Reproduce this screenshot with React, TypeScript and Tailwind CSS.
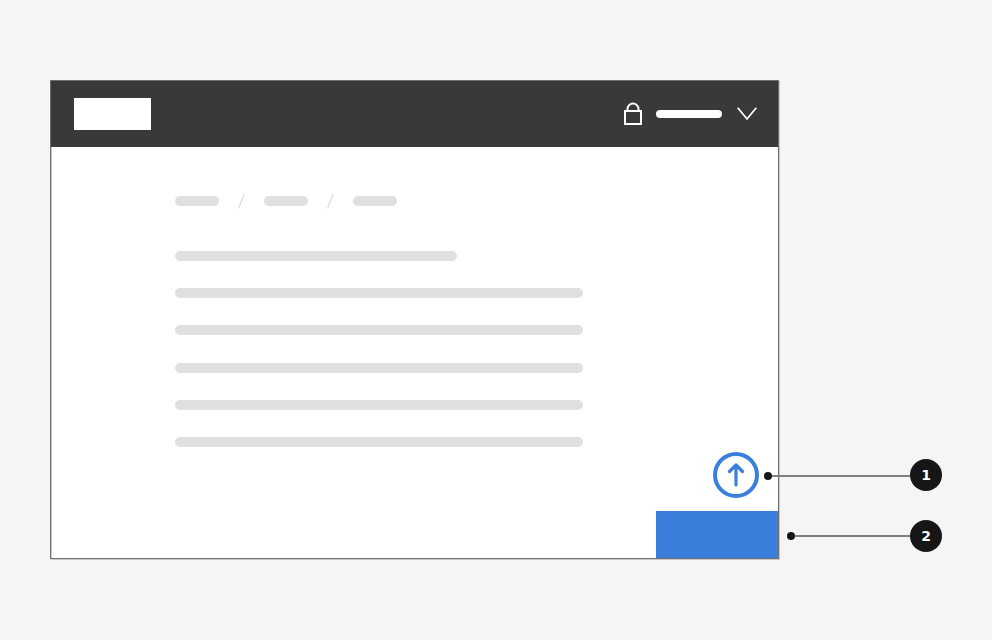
export default function App() {
  const lines = ["w-[282px]", "w-[408px]", "w-[408px]", "w-[408px]", "w-[408px]", "w-[408px]"];
  return (
    <div className="relative h-[640px] w-[992px] overflow-hidden bg-[#f5f5f5] pl-[50px] pt-20">
      <div className="relative flex h-[479px] w-[729px] flex-col border border-[#707070] bg-white shadow-[1px_1px_0_#c8c8c8,inset_1px_0_0_#c8c8c8]">
        <header className="flex h-[66px] items-center justify-between bg-[#393939] pl-[23px] pr-[21px]">
          <div className="h-8 w-[77px] bg-white" />
          <div className="flex items-center">
            <svg width="20" height="24" viewBox="0 0 20 24" fill="none" stroke="#fff" strokeWidth="2" className="mr-[13px]">
              <rect x="2" y="9" width="16" height="13" />
              <path d="M4.5 9V7a5.5 5.5 0 0 1 11 0V9" />
            </svg>
            <div className="h-2 w-[66px] rounded-full bg-white" />
            <svg width="20" height="14" viewBox="0 0 20 14" fill="none" stroke="#fff" strokeWidth="1.75" className="ml-[15px]">
              <path d="M.7 .8 10 12 19.3 .8" />
            </svg>
          </div>
        </header>
        <main className="flex flex-col pl-[124px] pt-[49px]">
          <nav className="flex h-[10px] items-center">
            <div className="h-[10px] w-11 rounded-full bg-[#e0e0e0]" />
            <span className="h-[15px] w-[45px] pl-[18px]">
              <svg width="8" height="15" viewBox="0 0 8 15" fill="none" stroke="#d0d0d0"><path d="M7 .5 1.5 14.5" /></svg>
            </span>
            <div className="h-[10px] w-11 rounded-full bg-[#e0e0e0]" />
            <span className="h-[15px] w-[45px] pl-[18px]">
              <svg width="8" height="15" viewBox="0 0 8 15" fill="none" stroke="#d0d0d0"><path d="M7 .5 1.5 14.5" /></svg>
            </span>
            <div className="h-[10px] w-11 rounded-full bg-[#e0e0e0]" />
          </nav>
          <div className="mt-[45px] flex flex-col gap-[27.2px]">
            {lines.map((w, i) => (
              <div key={i} className={`h-[10px] rounded-full bg-[#e0e0e0] ${w}`} />
            ))}
          </div>
        </main>
        <svg width="46" height="46" viewBox="0 0 46 46" fill="#fff" stroke="#3b7fdd" strokeLinecap="round" strokeLinejoin="round" className="absolute left-[662px] top-[371px]">
          <circle cx="23" cy="23" r="21" strokeWidth="4" />
          <path d="M23 33V13M16.5 19.5 23 13 29.5 19.5" fill="none" strokeWidth="3.2" />
        </svg>
        <div className="absolute bottom-0 right-0 h-[47px] w-[122px] bg-[#3b7fdd]" />
      </div>

      <div className="absolute left-[764px] top-[459px] flex h-8 items-center">
        <div className="mt-0.5 h-2 w-2 rounded-full bg-[#161616]" />
        <div className="mt-0.5 h-0.5 w-[138px] bg-[#808080]" />
        <div className="flex h-8 w-8 items-center justify-center rounded-full bg-[#161616] font-['DejaVu_Sans',sans-serif] text-sm font-bold text-white">1</div>
      </div>
      <div className="absolute left-[787px] top-[520px] flex h-8 items-center">
        <div className="h-2 w-2 rounded-full bg-[#161616]" />
        <div className="h-0.5 w-[115px] bg-[#808080]" />
        <div className="flex h-8 w-8 items-center justify-center rounded-full bg-[#161616] font-['DejaVu_Sans',sans-serif] text-sm font-bold text-white">2</div>
      </div>
    </div>
  );
}
